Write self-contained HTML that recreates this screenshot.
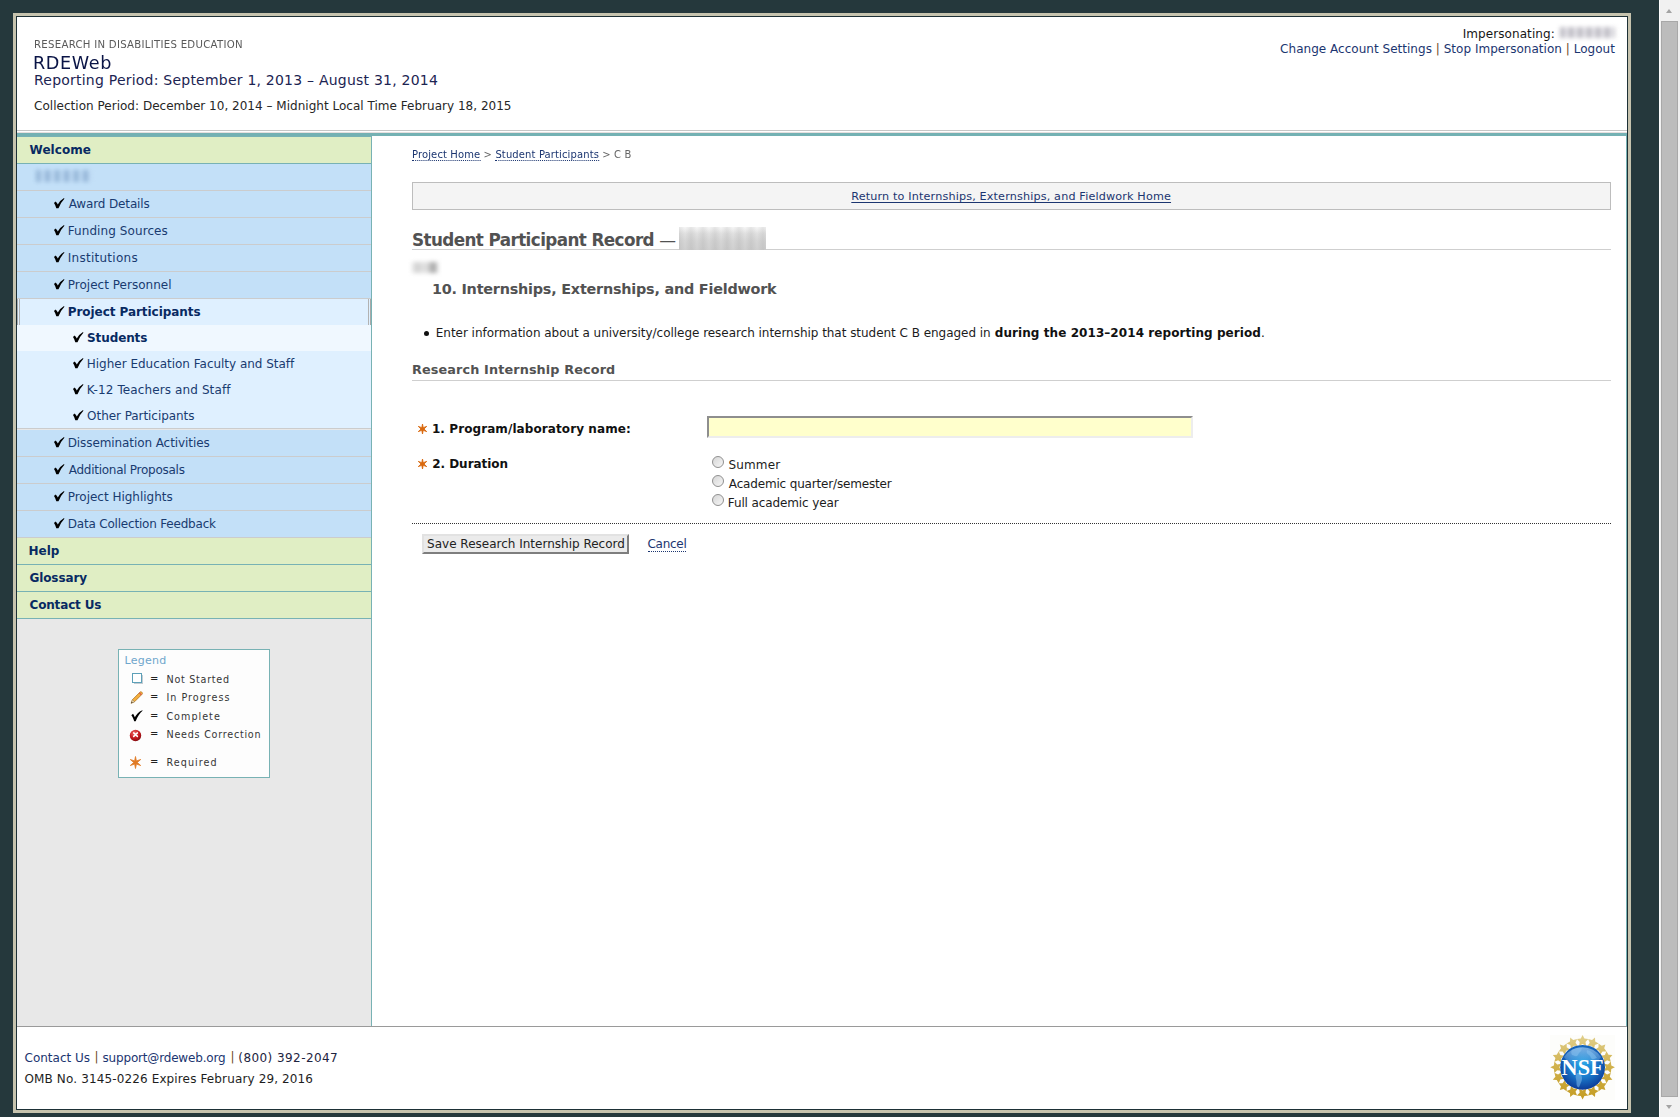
<!DOCTYPE html>
<html lang="en">
<head>
<meta charset="utf-8">
<title>RDEWeb - Student Participant Record</title>
<style>
html,body{margin:0;padding:0;}
body{width:1680px;height:1117px;overflow:hidden;background:#25383c;position:relative;
 font-family:"DejaVu Sans","Liberation Sans",sans-serif;font-size:12px;color:#111;}
a{color:#1b3570;text-decoration:none;}
i.pp{font-style:normal;color:#6e4a26;}
.t{position:absolute;white-space:nowrap;line-height:1;}
.dl{border-bottom:1px dotted #1b3570;padding-bottom:0;}
.ul{text-decoration:underline;text-underline-offset:2px;}
#frame{position:absolute;left:13px;top:13px;width:1612px;height:1094px;border:3px solid #c6c3ae;}
#page{position:absolute;left:16px;top:16px;width:1610px;height:1092px;border:1px solid #1d3036;background:#fff;}
#sb{position:absolute;left:1659px;top:0;width:20px;height:1117px;background:#f1f1f1;border-left:1px solid #fdfdfd;}
#sbthumb{position:absolute;left:1px;top:21px;width:15px;height:1074px;background:#bcbcbc;border:1px solid #a8a8a8;}
.arr{position:absolute;left:5.8px;width:0;height:0;border-left:3.7px solid transparent;border-right:3.7px solid transparent;}
#hdrline{position:absolute;left:17px;top:130px;width:1610px;height:1px;background:#c6c6c6;}
#teal{position:absolute;left:17px;top:133px;width:1610px;height:3px;background:#74b1b3;}
#mainbr{position:absolute;left:1626px;top:136px;width:1px;height:890px;background:#78b2b4;}
#side{position:absolute;left:17px;top:136px;width:354px;height:889px;background:#e8e8e8;border-right:1px solid #78b2b4;border-top:1px solid #78b2b4;}
#side .it{position:absolute;left:0;width:354px;box-sizing:border-box;}
#side .g{background:#e0eec4;border-bottom:1px solid #78b2b4;height:27px;}
#side .b{background:#c3e0f8;border-bottom:1px solid #cbcccd;height:27px;}
#side .s{background:#dff0ff;height:26px;}
#side .act{background:#dff0ff;border-bottom:0;}
#side .act:before{content:"";position:absolute;left:2px;top:0;width:348px;height:27px;border:1px solid #b2b2b2;border-top:0;border-bottom:0;}
#side .act:after{content:"";position:absolute;left:0;top:0;width:352px;height:27px;border-left:1px solid #a9a9a9;border-right:1px solid #a9a9a9;}
#side .sact{background:#f0f8ff;}
#side .last{border-bottom:1px solid #cbcccd;}
.chk,.req,.ic{position:absolute;}
#legend{position:absolute;left:118px;top:649px;width:150px;height:127px;border:1px solid #78b2b4;background:#fdfdfd;}
.blur{position:absolute;}
#retbox{position:absolute;left:412px;top:182px;width:1197px;height:26px;border:1px solid #bdbdbd;background:#f4f4f4;}
.hl{position:absolute;left:412px;width:1199px;height:1px;background:#cfcfcf;}
#inp{position:absolute;left:707px;top:416px;width:482px;height:18px;background:#ffffcc;border:2px solid;border-color:#8e8e8e #ededed #ededed #8e8e8e;}
.radio{position:absolute;width:12px;height:12px;border-radius:50%;border:1px solid #909090;background:linear-gradient(135deg,#d6d6d6,#f6f6f6);box-sizing:border-box;}
#dot{position:absolute;left:412px;top:523px;width:1199px;height:0;border-top:1px dotted #333;}
#btn{position:absolute;left:422px;top:534px;width:203px;height:16px;background:#ebebeb;border:2px solid;border-color:#e2e2e2 #7e7e7e #7e7e7e #e2e2e2;}
#ftline{position:absolute;left:17px;top:1026px;width:1610px;height:1px;background:#9a9a9a;}
</style>
</head>
<body>
<div id="frame"></div>
<div id="page"></div>
<div id="hdrline"></div>
<div id="teal"></div>
<div style="position:absolute;left:17px;top:132px;width:1610px;height:1px;background:#e6dfdf"></div>
<div id="mainbr"></div>
<div id="side">
<div class="it g" style="top:0px"></div>
<div class="it b" style="top:27px"></div>
<div class="it b" style="top:54px"></div>
<div class="it b" style="top:81px"></div>
<div class="it b" style="top:108px"></div>
<div class="it b" style="top:135px"></div>
<div class="it b act" style="top:162px"></div>
<div class="it s sact" style="top:188px"></div>
<div class="it s" style="top:214px"></div>
<div class="it s" style="top:240px"></div>
<div class="it s last" style="top:266px"></div>
<div class="it b" style="top:293px"></div>
<div class="it b" style="top:320px"></div>
<div class="it b" style="top:347px"></div>
<div class="it b" style="top:374px"></div>
<div class="it g" style="top:401px"></div>
<div class="it g" style="top:428px"></div>
<div class="it g" style="top:455px"></div>
</div>
<svg class="chk" style="left:53.7px;top:197.9px" width="11" height="11" viewBox="0 0 11 11"><path d="M0 5L1.5 3.6Q2.9 4.6 3.8 6.5Q6 2.500 10 0.1L10.4 0.7Q6.6 4.5 4.5 10.3L2.3 10.3Q1.6 7.2 0 5Z" fill="#000"/></svg>
<svg class="chk" style="left:53.7px;top:224.9px" width="11" height="11" viewBox="0 0 11 11"><path d="M0 5L1.5 3.6Q2.9 4.6 3.8 6.5Q6 2.500 10 0.1L10.4 0.7Q6.6 4.5 4.5 10.3L2.3 10.3Q1.6 7.2 0 5Z" fill="#000"/></svg>
<svg class="chk" style="left:53.7px;top:251.9px" width="11" height="11" viewBox="0 0 11 11"><path d="M0 5L1.5 3.6Q2.9 4.6 3.8 6.5Q6 2.500 10 0.1L10.4 0.7Q6.6 4.5 4.5 10.3L2.3 10.3Q1.6 7.2 0 5Z" fill="#000"/></svg>
<svg class="chk" style="left:53.7px;top:278.9px" width="11" height="11" viewBox="0 0 11 11"><path d="M0 5L1.5 3.6Q2.9 4.6 3.8 6.5Q6 2.500 10 0.1L10.4 0.7Q6.6 4.5 4.5 10.3L2.3 10.3Q1.6 7.2 0 5Z" fill="#000"/></svg>
<svg class="chk" style="left:53.7px;top:305.9px" width="11" height="11" viewBox="0 0 11 11"><path d="M0 5L1.5 3.6Q2.9 4.6 3.8 6.5Q6 2.500 10 0.1L10.4 0.7Q6.6 4.5 4.5 10.3L2.3 10.3Q1.6 7.2 0 5Z" fill="#000"/></svg>
<svg class="chk" style="left:72.7px;top:331.9px" width="11" height="11" viewBox="0 0 11 11"><path d="M0 5L1.5 3.6Q2.9 4.6 3.8 6.5Q6 2.500 10 0.1L10.4 0.7Q6.6 4.5 4.5 10.3L2.3 10.3Q1.6 7.2 0 5Z" fill="#000"/></svg>
<svg class="chk" style="left:72.7px;top:357.9px" width="11" height="11" viewBox="0 0 11 11"><path d="M0 5L1.5 3.6Q2.9 4.6 3.8 6.5Q6 2.500 10 0.1L10.4 0.7Q6.6 4.5 4.5 10.3L2.3 10.3Q1.6 7.2 0 5Z" fill="#000"/></svg>
<svg class="chk" style="left:72.7px;top:383.9px" width="11" height="11" viewBox="0 0 11 11"><path d="M0 5L1.5 3.6Q2.9 4.6 3.8 6.5Q6 2.500 10 0.1L10.4 0.7Q6.6 4.5 4.5 10.3L2.3 10.3Q1.6 7.2 0 5Z" fill="#000"/></svg>
<svg class="chk" style="left:72.7px;top:409.9px" width="11" height="11" viewBox="0 0 11 11"><path d="M0 5L1.5 3.6Q2.9 4.6 3.8 6.5Q6 2.500 10 0.1L10.4 0.7Q6.6 4.5 4.5 10.3L2.3 10.3Q1.6 7.2 0 5Z" fill="#000"/></svg>
<svg class="chk" style="left:53.7px;top:436.9px" width="11" height="11" viewBox="0 0 11 11"><path d="M0 5L1.5 3.6Q2.9 4.6 3.8 6.5Q6 2.500 10 0.1L10.4 0.7Q6.6 4.5 4.5 10.3L2.3 10.3Q1.6 7.2 0 5Z" fill="#000"/></svg>
<svg class="chk" style="left:53.7px;top:463.9px" width="11" height="11" viewBox="0 0 11 11"><path d="M0 5L1.5 3.6Q2.9 4.6 3.8 6.5Q6 2.500 10 0.1L10.4 0.7Q6.6 4.5 4.5 10.3L2.3 10.3Q1.6 7.2 0 5Z" fill="#000"/></svg>
<svg class="chk" style="left:53.7px;top:490.9px" width="11" height="11" viewBox="0 0 11 11"><path d="M0 5L1.5 3.6Q2.9 4.6 3.8 6.5Q6 2.500 10 0.1L10.4 0.7Q6.6 4.5 4.5 10.3L2.3 10.3Q1.6 7.2 0 5Z" fill="#000"/></svg>
<svg class="chk" style="left:53.7px;top:517.9px" width="11" height="11" viewBox="0 0 11 11"><path d="M0 5L1.5 3.6Q2.9 4.6 3.8 6.5Q6 2.500 10 0.1L10.4 0.7Q6.6 4.5 4.5 10.3L2.3 10.3Q1.6 7.2 0 5Z" fill="#000"/></svg>

<div id="legend"></div>

<svg class="ic" style="left:131px;top:672px" width="13" height="13" viewBox="0 0 13 13"><path d="M3 11.5h9M11.5 3v9" stroke="#c4ccd2" stroke-width="1" fill="none"/><rect x="1.5" y="1.5" width="9" height="9" fill="#fff" stroke="#5da0b8" stroke-width="1"/></svg>
<svg class="ic" style="left:129px;top:690px" width="15" height="15" viewBox="0 0 15 15"><path d="M2.2 13.2l1.3-3.6L11 2.1c.5-.5 1.2-.5 1.7 0l.4.4c.5.5.5 1.200 0 1.700L5.600 11.700z" fill="#f5ae3d" stroke="#b07a2c" stroke-width=".8"/><path d="M10.3 2.800l2.100 2.100" stroke="#d9534f" stroke-width="1.200"/><path d="M2.200 13.200l1.300-3.6 2.100 2.100z" fill="#ecdcb8" stroke="#8d7040" stroke-width=".5"/><path d="M2.200 13.200l.5-1.5 1 1z" fill="#333"/></svg>
<svg class="ic" style="left:131px;top:710px" width="12" height="12" viewBox="0 0 11 11"><path d="M0.3 4.9L1.9 3.500C2.600 4.5 3.100 5.500 3.500 6.700C5 4 7 1.6 10.4 0.200L10.600 0.600C8 2.9 5.900 6 4.300 10.3H2.9C2.3 8.200 1.5 6.400 0.300 4.900Z" fill="#000"/></svg>
<svg class="ic" style="left:129px;top:729px" width="13" height="13" viewBox="0 0 13 13"><defs><radialGradient id="rg" cx=".4" cy=".3" r=".8"><stop offset="0" stop-color="#ee6a66"/><stop offset=".55" stop-color="#c4161c"/><stop offset="1" stop-color="#6f0a0e"/></radialGradient></defs><circle cx="6.5" cy="6.5" r="5.700" fill="url(#rg)"/><path d="M4.700 3.900l3.700 3.500M8.400 3.900l-3.700 3.500" stroke="#fff" stroke-width="1.500" stroke-linecap="round"/></svg>
<svg class="ic" style="left:129px;top:756px" width="13" height="13" viewBox="0 0 13 13"><path d="M11.7 3.5L7.4 4.9L6.5 0.5L5.6 4.9L1.3 3.5L4.7 6.5L1.3 9.5L5.6 8.1L6.5 12.5L7.4 8.1L11.7 9.5L8.3 6.5Z" fill="#e07a24" stroke="#e07a24" stroke-width="0.8" stroke-linejoin="round"/></svg>
<div class="t" style="left:150px;top:674px;font-size:10px;color:#222;">=</div>
<div class="t" style="left:150px;top:692px;font-size:10px;color:#222;">=</div>
<div class="t" style="left:150px;top:711px;font-size:10px;color:#222;">=</div>
<div class="t" style="left:150px;top:729px;font-size:10px;color:#222;">=</div>
<div class="t" style="left:150px;top:757px;font-size:10px;color:#222;">=</div>

<div id="retbox"></div>
<div class="hl" style="top:249px"></div>
<div class="hl" style="top:380px"></div>
<svg class="req" style="left:417px;top:423.2px" width="11" height="12" viewBox="0 0 11 12"><path d="M9.7 3.4L6.2 4.7L5.5 1.0L4.8 4.7L1.3 3.4L4.0 6.0L1.3 8.6L4.8 7.3L5.5 11.0L6.2 7.3L9.7 8.6L7.0 6.0Z" fill="#d9690f" stroke="#d9690f" stroke-width="0.9" stroke-linejoin="round"/></svg><svg class="req" style="left:417px;top:458.2px" width="11" height="12" viewBox="0 0 11 12"><path d="M9.7 3.4L6.2 4.7L5.5 1.0L4.8 4.7L1.3 3.4L4.0 6.0L1.3 8.6L4.8 7.3L5.5 11.0L6.2 7.3L9.7 8.6L7.0 6.0Z" fill="#d9690f" stroke="#d9690f" stroke-width="0.9" stroke-linejoin="round"/></svg>
<div id="inp"></div>
<div class="radio" style="left:712px;top:456px"></div>
<div class="radio" style="left:712px;top:475px"></div>
<div class="radio" style="left:712px;top:494px"></div>
<div id="dot"></div>
<div id="btn"></div>
<div id="ftline"></div>
<div class="t" id="bul" style="left:424px;top:331px;width:5px;height:5px;border-radius:50%;background:#111;"></div>
<div class="blur" style="left:1560px;top:27px;width:55px;height:11px;background:repeating-linear-gradient(90deg,#c2c0c8 0,#aeacb6 2px,#c2c0c8 4px,#e6e5ea 6px,#e6e5ea 7.5px,#c2c0c8 9px);filter:blur(2px);opacity:.9;"></div>
<div class="blur" style="left:36px;top:170px;width:56px;height:12px;background:repeating-linear-gradient(90deg,#9dbcdc 0,#86a9cf 2px,#9dbcdc 4px,#c0dcf5 6px,#c0dcf5 8px,#9dbcdc 9.5px);filter:blur(2px);opacity:.9;"></div>
<div class="blur" style="left:679px;top:227px;width:87px;height:23px;background:repeating-linear-gradient(90deg,rgba(120,120,120,.13) 0,rgba(120,120,120,0) 6px,rgba(120,120,120,.13) 12px),linear-gradient(#f7f7f7,#e0e0e0 30%,#d6d6d6 60%,#d0d0d0);"></div>
<div class="blur" style="left:412px;top:262px;width:26px;height:11px;background:linear-gradient(90deg,#e6e6e6 0,#d2d2d2 5px,#e2e2e2 12px,#d8d8d8 16px,#a2a2a2 21px,#d6d6d6 26px,#ececec 29px);filter:blur(2px);"></div>
<svg class="ic" style="left:1550px;top:1035px" width="65" height="65" viewBox="0 0 65 65">
<defs><radialGradient id="gl" cx=".5" cy=".42" r=".62"><stop offset="0" stop-color="#1fa4e6"/><stop offset=".45" stop-color="#1b7fd0"/><stop offset="1" stop-color="#0b3290"/></radialGradient>
<linearGradient id="gtop" x1="0" y1="0" x2="0" y2="1"><stop offset="0" stop-color="#9cc4ec" stop-opacity=".75"/><stop offset="1" stop-color="#9cc4ec" stop-opacity="0"/></linearGradient>
<linearGradient id="gd" gradientUnits="userSpaceOnUse" x1="0" y1="0" x2="0" y2="65"><stop offset="0" stop-color="#e0cf8c"/><stop offset=".5" stop-color="#d0b04a"/><stop offset="1" stop-color="#c49c22"/></linearGradient></defs>
<rect width="65" height="65" fill="#fdfdfb"/>
<g fill="url(#gd)"><path d="M32.6 -0.0L34.4 3.6L38.3 4.1L35.5 6.9L36.1 10.9L32.6 9.0L29.1 10.9L29.7 6.9L26.9 4.1L30.8 3.6Z"/><path d="M45.0 2.5L45.2 6.4L48.6 8.5L44.9 10.0L44.1 13.8L41.5 10.8L37.5 11.1L39.7 7.8L38.1 4.1L42.0 5.1Z"/><path d="M55.4 9.5L54.2 13.2L56.5 16.4L52.6 16.4L50.3 19.6L49.1 15.8L45.3 14.6L48.5 12.3L48.5 8.4L51.7 10.7Z"/><path d="M62.4 19.9L59.8 22.9L60.8 26.8L57.1 25.2L53.8 27.4L54.1 23.4L51.1 20.8L54.9 20.0L56.4 16.3L58.5 19.7Z"/><path d="M64.9 32.3L61.3 34.1L60.8 38.0L58.0 35.2L54.0 35.8L55.9 32.3L54.0 28.8L58.0 29.4L60.8 26.6L61.3 30.5Z"/><path d="M62.4 44.7L58.5 44.9L56.4 48.3L54.9 44.6L51.1 43.8L54.1 41.2L53.8 37.2L57.1 39.4L60.8 37.8L59.8 41.7Z"/><path d="M55.4 55.1L51.7 53.9L48.5 56.2L48.5 52.3L45.3 50.0L49.1 48.8L50.3 45.0L52.6 48.2L56.5 48.2L54.2 51.4Z"/><path d="M45.0 62.1L42.0 59.5L38.1 60.5L39.7 56.8L37.5 53.5L41.5 53.8L44.1 50.8L44.9 54.6L48.6 56.1L45.2 58.2Z"/><path d="M32.6 64.6L30.8 61.0L26.9 60.5L29.7 57.7L29.1 53.7L32.6 55.6L36.1 53.7L35.5 57.7L38.3 60.5L34.4 61.0Z"/><path d="M20.2 62.1L20.0 58.2L16.6 56.1L20.3 54.6L21.1 50.8L23.7 53.8L27.7 53.5L25.5 56.8L27.1 60.5L23.2 59.5Z"/><path d="M9.8 55.1L11.0 51.4L8.7 48.2L12.6 48.2L14.9 45.0L16.1 48.8L19.9 50.0L16.7 52.3L16.7 56.2L13.5 53.9Z"/><path d="M2.8 44.7L5.4 41.7L4.4 37.8L8.1 39.4L11.4 37.2L11.1 41.2L14.1 43.8L10.3 44.6L8.8 48.3L6.7 44.9Z"/><path d="M0.3 32.3L3.9 30.5L4.4 26.6L7.2 29.4L11.2 28.8L9.3 32.3L11.2 35.8L7.2 35.2L4.4 38.0L3.9 34.1Z"/><path d="M2.8 19.9L6.7 19.7L8.8 16.3L10.3 20.0L14.1 20.8L11.1 23.4L11.4 27.4L8.1 25.2L4.4 26.8L5.4 22.9Z"/><path d="M9.8 9.5L13.5 10.7L16.7 8.4L16.7 12.3L19.9 14.6L16.1 15.8L14.9 19.6L12.6 16.4L8.7 16.4L11.0 13.2Z"/><path d="M20.2 2.5L23.2 5.1L27.1 4.1L25.5 7.8L27.7 11.1L23.7 10.8L21.1 13.8L20.3 10.0L16.6 8.5L20.0 6.4Z"/></g>
<circle cx="32.6" cy="32.3" r="22.4" fill="url(#gl)"/>
<path d="M14 22a22.4 22.4 0 0 1 37 0c-4 6-9 9-18 9s-15-3-19-9z" fill="url(#gtop)"/>
<path d="M22 15c3-2 7-3 10-2-1 2 0 3-2 4s-1 3-3 4-3-1-5-1c-1-2-1-3 0-5zM37 15c4 1 8 4 10 8-2 0-3 2-5 1s-1-3-3-4-3-3-2-5zM27 38c3 0 5 2 5 5s-1 4-2 7-2 3-3 1 0-4-1-7 0-4 1-6z" fill="#8cc4f0" opacity=".5"/>
<text x="32.6" y="40" text-anchor="middle" font-family="Liberation Serif,DejaVu Serif,serif" font-weight="bold" font-size="23" fill="#fff" textLength="42" lengthAdjust="spacingAndGlyphs">NSF</text>
</svg>
<div class="t" id="h1a" style="left:34.10px;top:40.18px;font-size:9.6px;font-weight:normal;color:#5a5a5a;letter-spacing:0.248px;transform-origin:0 0;transform:scaleX(1.06);">RESEARCH IN DISABILITIES EDUCATION</div>
<div class="t" id="h1b" style="left:33.20px;top:55.26px;font-size:16.8px;font-weight:normal;color:#0a1446;letter-spacing:0.600px;transform-origin:0 0;transform:scaleX(1.05);">RDEWeb</div>
<div class="t" id="h1c" style="left:34.00px;top:72.61px;font-size:14px;font-weight:normal;color:#1c2452;letter-spacing:0.222px;">Reporting Period: September 1, 2013 – August 31, 2014</div>
<div class="t" id="h1d" style="left:34.10px;top:99.84px;font-size:12px;font-weight:normal;color:#262626;letter-spacing:0.018px;">Collection Period: December 10, 2014 – Midnight Local Time February 18, 2015</div>
<div class="t" id="h2a" style="left:1462.70px;top:27.84px;font-size:12px;font-weight:normal;color:#161616;letter-spacing:0.077px;">Impersonating:</div>
<div class="t" id="h2b" style="left:1280.10px;top:42.84px;font-size:12px;font-weight:normal;color:#1b3570;letter-spacing:0.025px;"><a>Change Account Settings</a> <i class="pp">|</i> <a>Stop Impersonation</a> <i class="pp">|</i> <a>Logout</a></div>
<div class="t" id="f1a" style="left:24.50px;top:1051.84px;font-size:12px;font-weight:normal;color:#1b3570;letter-spacing:0.000px;"><a>Contact Us</a></div>
<div class="t" id="f1b" style="left:102.50px;top:1051.84px;font-size:12px;font-weight:normal;color:#1b3570;letter-spacing:-0.176px;"><a>support@rdeweb.org</a></div>
<div class="t" id="f1c" style="left:238.30px;top:1051.84px;font-size:12px;font-weight:normal;color:#1d2440;letter-spacing:0.431px;">(800) 392-2047</div>
<div class="t" id="f2" style="left:24.50px;top:1072.84px;font-size:12px;font-weight:normal;color:#1e1e1e;letter-spacing:0.131px;">OMB No. 3145-0226 Expires February 29, 2016</div>
<div class="t" id="s_welcome" style="left:29.50px;top:143.84px;font-size:12px;font-weight:bold;color:#082a62;letter-spacing:0.067px;">Welcome</div>
<div class="t" id="s_award" style="left:68.70px;top:197.84px;font-size:12px;font-weight:normal;color:#193b70;letter-spacing:-0.130px;">Award Details</div>
<div class="t" id="s_fund" style="left:67.70px;top:224.84px;font-size:12px;font-weight:normal;color:#193b70;letter-spacing:0.085px;">Funding Sources</div>
<div class="t" id="s_inst" style="left:67.70px;top:251.84px;font-size:12px;font-weight:normal;color:#193b70;letter-spacing:0.273px;">Institutions</div>
<div class="t" id="s_pers" style="left:67.70px;top:278.84px;font-size:12px;font-weight:normal;color:#193b70;letter-spacing:0.025px;">Project Personnel</div>
<div class="t" id="s_part" style="left:67.70px;top:305.84px;font-size:12px;font-weight:bold;color:#082a62;letter-spacing:-0.052px;">Project Participants</div>
<div class="t" id="s_stud" style="left:87.10px;top:331.84px;font-size:12px;font-weight:bold;color:#082a62;letter-spacing:-0.117px;">Students</div>
<div class="t" id="s_high" style="left:86.80px;top:357.84px;font-size:12px;font-weight:normal;color:#193b70;letter-spacing:-0.018px;">Higher Education Faculty and Staff</div>
<div class="t" id="s_k12" style="left:86.80px;top:383.84px;font-size:12px;font-weight:normal;color:#193b70;letter-spacing:0.114px;">K-12 Teachers and Staff</div>
<div class="t" id="s_other" style="left:87.10px;top:409.84px;font-size:12px;font-weight:normal;color:#193b70;letter-spacing:-0.058px;">Other Participants</div>
<div class="t" id="s_diss" style="left:67.70px;top:436.84px;font-size:12px;font-weight:normal;color:#193b70;letter-spacing:-0.087px;">Dissemination Activities</div>
<div class="t" id="s_addl" style="left:68.70px;top:463.84px;font-size:12px;font-weight:normal;color:#193b70;letter-spacing:-0.263px;">Additional Proposals</div>
<div class="t" id="s_high2" style="left:67.70px;top:490.84px;font-size:12px;font-weight:normal;color:#193b70;letter-spacing:-0.019px;">Project Highlights</div>
<div class="t" id="s_data" style="left:67.70px;top:517.84px;font-size:12px;font-weight:normal;color:#193b70;letter-spacing:-0.192px;">Data Collection Feedback</div>
<div class="t" id="s_help" style="left:28.50px;top:544.84px;font-size:12px;font-weight:bold;color:#082a62;letter-spacing:-0.000px;">Help</div>
<div class="t" id="s_glos" style="left:29.50px;top:571.84px;font-size:12px;font-weight:bold;color:#082a62;letter-spacing:-0.117px;">Glossary</div>
<div class="t" id="s_cont" style="left:29.50px;top:598.84px;font-size:12px;font-weight:bold;color:#082a62;letter-spacing:-0.159px;">Contact Us</div>
<div class="t" id="lg_t" style="left:124.50px;top:654.77px;font-size:11px;font-weight:normal;color:#6fa6cc;letter-spacing:0.280px;">Legend</div>
<div class="t" id="lg1" style="left:166.50px;top:674.70px;font-size:9.6px;font-weight:normal;color:#353535;letter-spacing:0.720px;">Not Started</div>
<div class="t" id="lg2" style="left:166.40px;top:692.70px;font-size:9.6px;font-weight:normal;color:#353535;letter-spacing:1.020px;">In Progress</div>
<div class="t" id="lg3" style="left:166.40px;top:711.70px;font-size:9.6px;font-weight:normal;color:#353535;letter-spacing:1.027px;">Complete</div>
<div class="t" id="lg4" style="left:166.50px;top:729.70px;font-size:9.6px;font-weight:normal;color:#353535;letter-spacing:0.754px;">Needs Correction</div>
<div class="t" id="lg5" style="left:166.50px;top:757.70px;font-size:9.6px;font-weight:normal;color:#353535;letter-spacing:1.055px;">Required</div>
<div class="t" id="bc" style="left:411.50px;top:149.70px;font-size:9.6px;font-weight:normal;color:#666;letter-spacing:0.123px;transform-origin:0 0;transform:scaleX(1.04);"><a class="dl">Project Home</a> &gt; <a class="dl">Student Participants</a> &gt; C B</div>
<div class="t" id="ret" style="left:851.30px;top:191.31px;font-size:11.2px;font-weight:normal;color:#1b3570;letter-spacing:0.156px;"><a class="ul">Return to Internships, Externships, and Fieldwork Home</a></div>
<div class="t" id="t1" style="left:412.00px;top:232.38px;font-size:16.8px;font-weight:bold;color:#525252;letter-spacing:-0.593px;">Student Participant Record <span style="font-weight:normal">—</span></div>
<div class="t" id="t2" style="left:431.90px;top:281.61px;font-size:14.4px;font-weight:bold;color:#525252;letter-spacing:-0.226px;">10. Internships, Externships, and Fieldwork</div>
<div class="t" id="p1a" style="left:435.80px;top:326.84px;font-size:12px;font-weight:normal;color:#1c1c1c;letter-spacing:-0.035px;">Enter information about a university/college research internship that student C B engaged in</div>
<div class="t" id="p1b" style="left:994.80px;top:326.84px;font-size:12px;font-weight:bold;color:#111;letter-spacing:0.069px;">during the 2013–2014 reporting period<span style="font-weight:normal">.</span></div>
<div class="t" id="t3" style="left:412.00px;top:363.72px;font-size:12.8px;font-weight:bold;color:#525252;letter-spacing:0.124px;">Research Internship Record</div>
<div class="t" id="l1" style="left:431.90px;top:422.84px;font-size:12px;font-weight:bold;color:#111;letter-spacing:0.089px;">1. Program/laboratory name:</div>
<div class="t" id="l2" style="left:432.20px;top:457.84px;font-size:12px;font-weight:bold;color:#111;letter-spacing:-0.030px;">2. Duration</div>
<div class="t" id="r1" style="left:728.40px;top:458.84px;font-size:12px;font-weight:normal;color:#1c1c1c;letter-spacing:0.160px;">Summer</div>
<div class="t" id="r2" style="left:728.80px;top:477.84px;font-size:12px;font-weight:normal;color:#1c1c1c;letter-spacing:-0.167px;">Academic quarter/semester</div>
<div class="t" id="r3" style="left:727.80px;top:496.84px;font-size:12px;font-weight:normal;color:#1c1c1c;letter-spacing:-0.122px;">Full academic year</div>
<div class="t" id="btntx" style="left:427.10px;top:537.84px;font-size:12px;font-weight:normal;color:#222;letter-spacing:-0.000px;">Save Research Internship Record</div>
<div class="t" id="cancel" style="left:647.50px;top:537.84px;font-size:12px;font-weight:normal;color:#1b3570;letter-spacing:-0.280px;"><a class="dl">Cancel</a></div>
<div class="t" style="left:94.6px;top:1051px;font-size:12px;color:#6e4a26;">|</div>
<div class="t" style="left:230.6px;top:1051px;font-size:12px;color:#6e4a26;">|</div>

<div id="sb">
 <div class="arr" style="top:9px;border-bottom:4px solid #a3a3a3;"></div>
 <div id="sbthumb"></div>
 <div class="arr" style="top:1105px;border-top:4px solid #a3a3a3;"></div>
</div>
</body>
</html>
